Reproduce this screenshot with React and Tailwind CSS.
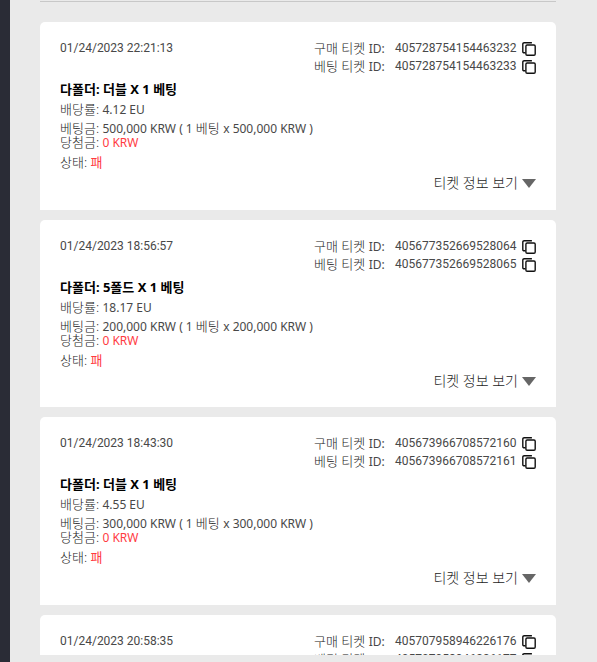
const tickets = [
  { date: '01/24/2023 22:21:13', buyId: '405728754154463232', betId: '405728754154463233', kind: '더블', odds: '4.12', stake: '500,000' },
  { date: '01/24/2023 18:56:57', buyId: '405677352669528064', betId: '405677352669528065', kind: '5폴드', odds: '18.17', stake: '200,000' },
  { date: '01/24/2023 18:43:30', buyId: '405673966708572160', betId: '405673966708572161', kind: '더블', odds: '4.55', stake: '300,000' },
  { date: '01/24/2023 20:58:35', buyId: '405707958946226176', betId: '405707958946226177', kind: '더블', odds: '4.32', stake: '300,000' },
];

function CopyIcon() {
  return (
    <svg viewBox="0 0 14 14" className="block size-3.5" fill="none" stroke="#111" strokeWidth="1.4" aria-hidden="true">
      <rect x="3.9" y="3" width="9.3" height="10.2" rx="1.2" />
      <path d="M3.5 10.8H2.2Q.8 10.8 .8 9.4V2.1Q.8.8 2.2.8H9.9" />
    </svg>
  );
}

function Ko({ children }) {
  return <span className="text-[13px] font-light text-[#222]">{children}</span>;
}

function TicketId({ label, value }) {
  return (
    <div className="flex h-[18px] items-center leading-[18px]">
      <dt className="w-[81px]"><Ko>{label} </Ko>ID:</dt>
      <dd className="w-[119px] font-['Roboto',sans-serif] whitespace-nowrap">{value}</dd>
      <dd className="ml-2 pt-0.5">
        <button type="button" aria-label={`${label} ID ${value}`} className="block cursor-pointer">
          <CopyIcon />
        </button>
      </dd>
    </div>
  );
}

function TicketCard({ ticket }) {
  return (
    <article className="shrink-0 rounded-t-[5px] bg-white px-5 pt-[17px] pb-[17px] even:pb-4">
      <header className="flex items-start justify-between">
        <time className="font-['Roboto',sans-serif] leading-[18px]">{ticket.date}</time>
        <dl>
          <TicketId label="구매 티켓" value={ticket.buyId} />
          <TicketId label="베팅 티켓" value={ticket.betId} />
        </dl>
      </header>
      <h2 className="mt-1 h-5 text-[13px] leading-5 font-bold text-black">
        다폴더: {ticket.kind} X 1 베팅
      </h2>
      <p className="h-5 leading-5"><Ko>배당률: </Ko>{ticket.odds} EU</p>
      <p className="mt-0.5 h-3.5 leading-[14px]">
        <Ko>베팅금: </Ko>{ticket.stake} KRW ( 1 <Ko>베팅 </Ko>x {ticket.stake} KRW )
      </p>
      <p className="h-3.5 leading-[14px]"><Ko>당첨금: </Ko><span className="text-[#ff3b3f]">0 KRW</span></p>
      <p className="mt-[3px] h-5 leading-5"><Ko>상태: <span className="font-normal text-[#ff3b3f]">패</span></Ko></p>
      <div className="flex justify-end">
        <button type="button" className="mt-px flex h-5 cursor-pointer items-center gap-1 text-sm leading-5 font-light text-[#222]">
          티켓 정보 보기
          <svg viewBox="0 0 14 9" className="h-[9px] w-3.5" fill="#666" aria-hidden="true">
            <path d="M0 0H14L7 9Z" />
          </svg>
        </button>
      </div>
    </article>
  );
}

export default function App() {
  return (
    <div className="flex h-screen bg-[#eaeaea] font-['Noto_Sans','Noto_Sans_CJK_KR',sans-serif] text-xs text-[#484848]">
      <aside className="w-2.5 shrink-0 bg-[#2a2c36]" />
      <main className="flex min-w-0 flex-1 flex-col pt-px pr-[41px] pb-[7px] pl-[30px]">
        <hr className="shrink-0 border-t border-[#c8c8c8]" />
        <section className="mt-5 flex min-h-0 flex-1 flex-col gap-2.5 overflow-hidden">
          {tickets.map((ticket) => (
            <TicketCard key={ticket.buyId} ticket={ticket} />
          ))}
        </section>
      </main>
    </div>
  );
}
